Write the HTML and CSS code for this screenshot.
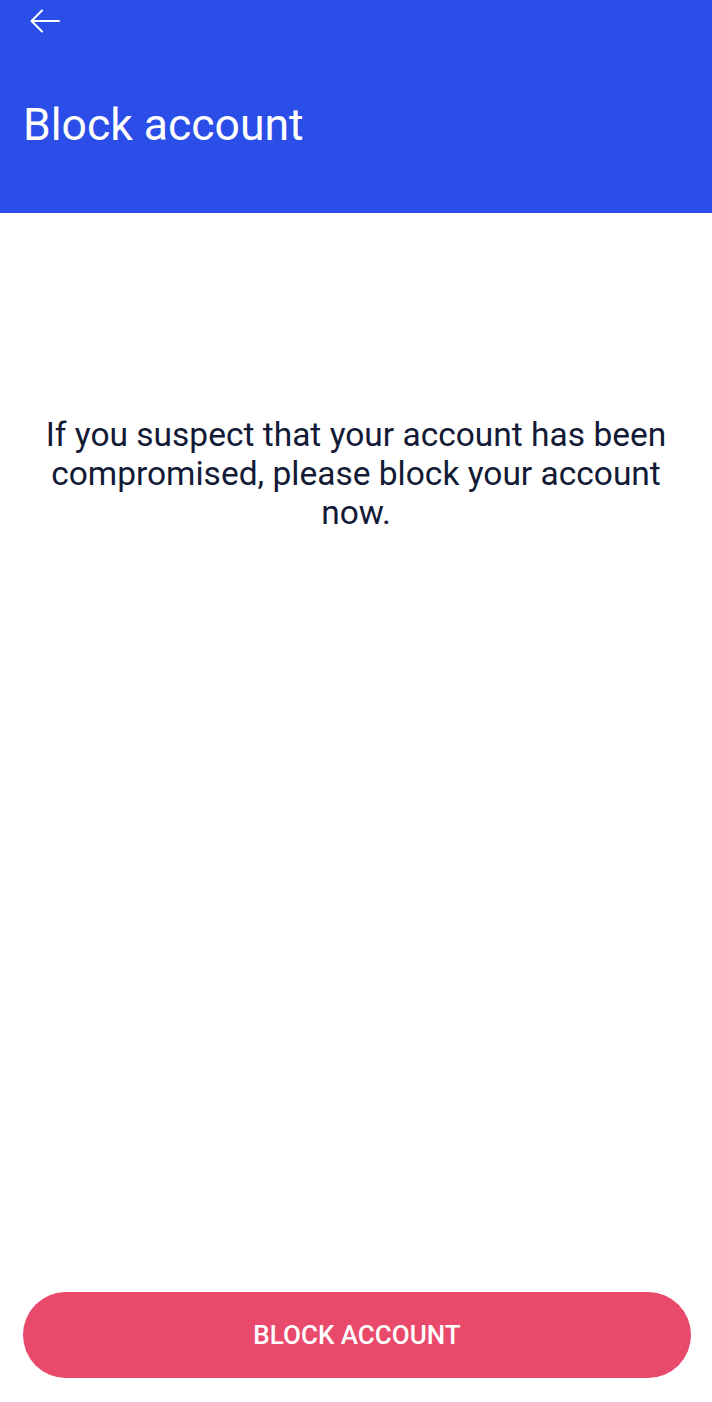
FILE: index.html
```html
<!DOCTYPE html>
<html>
<head>
<meta charset="utf-8">
<link rel="stylesheet" href="styles.css">
</head>
<body>
<div class="screen">
  <header class="appbar">
    <button class="back" aria-label="Back">
      <svg width="30" height="24" viewBox="0 0 30 24"><path d="M29 12H2M12 1.5L1.5 12L12 22.5" fill="none" stroke="#fff" stroke-width="2" stroke-linecap="round" stroke-linejoin="round"/></svg>
    </button>
    <h1 class="title">Block account</h1>
  </header>
  <main class="content">
    <p class="message">If you suspect that your account has been compromised, please block your account now.</p>
  </main>
  <footer class="actions">
    <button class="block-btn">BLOCK ACCOUNT</button>
  </footer>
</div>
</body>
</html>
```
FILE: styles.css
```css
html, body {
  margin: 0;
  padding: 0;
  background: #ffffff;
  font-family: Roboto, "Noto Sans", sans-serif;
}
.screen {
  width: 712px;
  height: 1402px;
  display: flex;
  flex-direction: column;
}
.appbar {
  background: #2b4ee8;
  height: 213px;
  box-sizing: border-box;
  padding: 9px 0 0 23px;
  display: flex;
  flex-direction: column;
}
.back {
  background: none;
  border: none;
  padding: 0;
  margin: 0 0 0 7px;
  width: 30px;
  height: 24px;
  display: block;
}
.back svg { display: block; }
.title {
  margin: 64px 0 0 0;
  color: #ffffff;
  font-weight: 400;
  font-size: 44.5px;
  line-height: 56px;
}
.content {
  flex: 1;
  display: flex;
  justify-content: center;
  padding: 0 30px;
}
.message {
  margin: 202px 0 0 0;
  text-align: center;
  color: #121a36;
  font-size: 33.5px;
  line-height: 39px;
}
.actions {
  padding: 0 21px 24px 23px;
}
.block-btn {
  width: 100%;
  height: 86px;
  border: none;
  border-radius: 43px;
  background: #e9496a;
  color: #ffffff;
  font-family: Roboto, sans-serif;
  font-weight: 500;
  font-size: 26px;
  letter-spacing: 0;
}
```
